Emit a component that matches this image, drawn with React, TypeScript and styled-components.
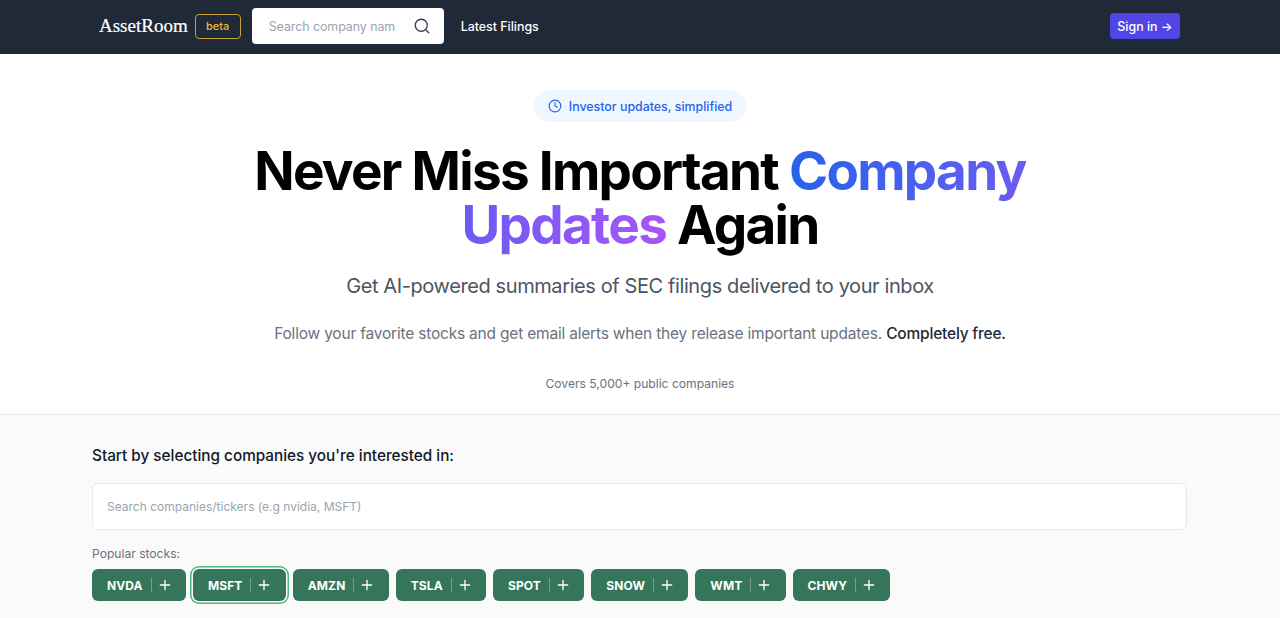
import React from "react"
import styled, { createGlobalStyle } from "styled-components"
import { Clock, Plus, Search } from "lucide-react"

const stocks = ["NVDA", "MSFT", "AMZN", "TSLA", "SPOT", "SNOW", "WMT", "CHWY"]

function App() {
    return (
        <Page>
            <GlobalStyle />
            <Header>
                <Brand>AssetRoom</Brand>
                <Beta>beta</Beta>
                <NavSearch>
                    <NavInput placeholder="Search company name" />
                    <Search size={18} strokeWidth={1.75} color="#374151" />
                </NavSearch>
                <NavLink>Latest Filings</NavLink>
                <SignIn>Sign in →</SignIn>
            </Header>
            <Hero>
                <Pill>
                    <Clock size={14} strokeWidth={2} />
                    Investor updates, simplified
                </Pill>
                <Title>
                    Never Miss Important <Gradient>Company Updates</Gradient> Again
                </Title>
                <SubTitle>Get AI-powered summaries of SEC filings delivered to your inbox</SubTitle>
                <Lead>
                    Follow your favorite stocks and get email alerts when they release important updates.{" "}
                    <strong>Completely free.</strong>
                </Lead>
                <Coverage>Covers 5,000+ public companies</Coverage>
            </Hero>
            <Picker>
                <PickerTitle>Start by selecting companies you're interested in:</PickerTitle>
                <PickerInput placeholder="Search companies/tickers (e.g nvidia, MSFT)" />
                <PopularLabel>Popular stocks:</PopularLabel>
                <Chips>
                    {stocks.map((ticker) => (
                        <Chip key={ticker} $focused={ticker === "MSFT"}>
                            {ticker}
                            <ChipDivider />
                            <Plus size={16} strokeWidth={2} />
                        </Chip>
                    ))}
                </Chips>
            </Picker>
        </Page>
    )
}

const GlobalStyle = createGlobalStyle`
    html, body {
        margin: 0;
        height: 618px;
        overflow: hidden;
        background: #fafafa;
    }
    * {
        box-sizing: border-box;
    }
`

const Page = styled.div`
    font-family: Inter, "Liberation Sans", sans-serif;
    color: #000;
`

// top bar

const Header = styled.header`
    display: flex;
    align-items: center;
    height: 54px;
    padding: 0 100px 2px 99px;
    background: #1f2937;
`

const Brand = styled.div`
    font-family: "Liberation Serif", serif;
    font-size: 19px;
    color: #fff;
    -webkit-text-stroke: 0.2px #fff;
`

const Beta = styled.div`
    display: flex;
    align-items: center;
    justify-content: center;
    width: 46px;
    height: 25px;
    margin-left: 7px;
    border: 1px solid #c79f35;
    border-radius: 4px;
    font-size: 11px;
    font-weight: 500;
    color: #eab940;
`

const NavSearch = styled.div`
    display: flex;
    align-items: center;
    width: 192px;
    height: 36px;
    margin-left: 11px;
    padding: 0 13px 0 17px;
    background: #fff;
    border-radius: 4px;
`

const NavInput = styled.input`
    flex: 1;
    min-width: 0;
    margin-right: 17px;
    padding: 0;
    border: 0;
    outline: 0;
    background: transparent;
    font-family: inherit;
    font-size: 12.4px;
    letter-spacing: -0.05px;
    &::placeholder {
        color: #9ca3af;
    }
`

const NavLink = styled.div`
    margin-left: 17px;
    font-size: 12.4px;
    font-weight: 500;
    color: #fff;
`

const SignIn = styled.button`
    width: 70px;
    height: 26px;
    margin-left: auto;
    padding: 0;
    border: 0;
    border-radius: 4px;
    background: #4f46e5;
    font-family: inherit;
    font-size: 12.4px;
    font-weight: 500;
    color: #fff;
`

// hero

const Hero = styled.section`
    display: flex;
    flex-direction: column;
    align-items: center;
    height: 361px;
    padding-top: 36px;
    background: #fff;
    border-bottom: 1px solid #e5e7eb;
    text-align: center;
`

const Pill = styled.div`
    display: flex;
    align-items: center;
    gap: 7px;
    height: 32px;
    padding: 0 14px;
    border-radius: 16px;
    background: #eff6ff;
    font-size: 12.4px;
    font-weight: 500;
    color: #2563eb;
`

const Title = styled.h1`
    width: 800px;
    margin: 22px 0 0;
    font-size: 53px;
    font-weight: 700;
    line-height: 54px;
    letter-spacing: -1.7px;
`

const Gradient = styled.span`
    background: linear-gradient(to right, #2563eb, #a855f7);
    -webkit-background-clip: text;
    background-clip: text;
    color: transparent;
`

const SubTitle = styled.p`
    margin: 20px 0 0;
    font-size: 20px;
    line-height: 28px;
    letter-spacing: -0.4px;
    color: #4b5563;
`

const Lead = styled.p`
    margin: 22px 0 0;
    font-size: 15.5px;
    line-height: 24px;
    letter-spacing: -0.2px;
    color: #6b7280;
    strong {
        font-weight: 500;
        color: #1f2937;
    }
`

const Coverage = styled.p`
    margin: 29px 0 0;
    font-size: 12.1px;
    line-height: 18px;
    color: #6b7280;
`

// company picker

const Picker = styled.section`
    padding: 30px 93px 0 92px;
`

const PickerTitle = styled.h2`
    margin: 0;
    font-size: 15.3px;
    font-weight: 500;
    line-height: 22px;
    color: #111827;
`

const PickerInput = styled.input`
    display: block;
    width: 100%;
    height: 47px;
    margin-top: 16px;
    padding: 0 14px;
    border: 1px solid #e5e7eb;
    border-radius: 6px;
    outline: 0;
    background: #fff;
    font-family: inherit;
    font-size: 12px;
    &::placeholder {
        color: #9ca3af;
    }
`

const PopularLabel = styled.div`
    margin-top: 15px;
    font-size: 12.1px;
    line-height: 18px;
    color: #6b7280;
`

const Chips = styled.div`
    display: flex;
    gap: 7px;
    margin-top: 6px;
`

const Chip = styled.button<{ $focused?: boolean }>`
    display: flex;
    align-items: center;
    height: 32px;
    padding: 0 13.3px 0 15px;
    border: 0;
    border-radius: 6px;
    background: #35755a;
    font-family: inherit;
    font-size: 12px;
    font-weight: 700;
    letter-spacing: 0.1px;
    color: #fff;
    box-shadow: ${({ $focused }) => ($focused ? "0 0 0 1.5px #fafafa, 0 0 0 3px #4fb58a" : "none")};
`

const ChipDivider = styled.span`
    width: 1px;
    height: 14px;
    margin: 0 5px 0 8px;
    background: rgba(255, 255, 255, 0.3);
`

export default App
